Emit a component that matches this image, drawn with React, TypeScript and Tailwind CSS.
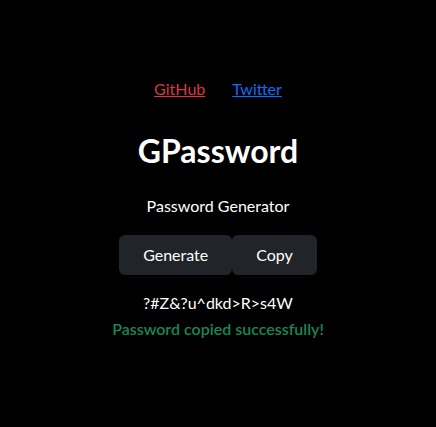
export default function App() {
  return (
    <div
      className="flex min-h-[427px] flex-col items-center bg-black pt-[77px] text-white"
      style={{ fontFamily: 'Lato, "Noto Sans", sans-serif' }}
    >
      <nav className="flex gap-[27px] text-base leading-6">
        <a href="#" className="text-[#dc3545] underline">
          GitHub
        </a>
        <a href="#" className="text-[#0d6efd] underline">
          Twitter
        </a>
      </nav>

      <h1 className="mt-[31px] text-[32px] font-bold leading-[38px]">GPassword</h1>
      <p className="mt-[24px] text-base leading-6">Password Generator</p>

      <div className="mt-[17px] flex">
        <button className="h-10 rounded-md bg-[#212529] px-6 text-base text-white">Generate</button>
        <button className="h-10 rounded-md bg-[#212529] px-6 text-base text-white">Copy</button>
      </div>

      <p className="mt-[16px] text-base leading-6">?#Z&amp;?u^dkd&gt;R&gt;s4W</p>
      <p className="mt-[2px] text-base font-semibold leading-6 text-[#198754]">
        Password copied successfully!
      </p>
    </div>
  )
}
